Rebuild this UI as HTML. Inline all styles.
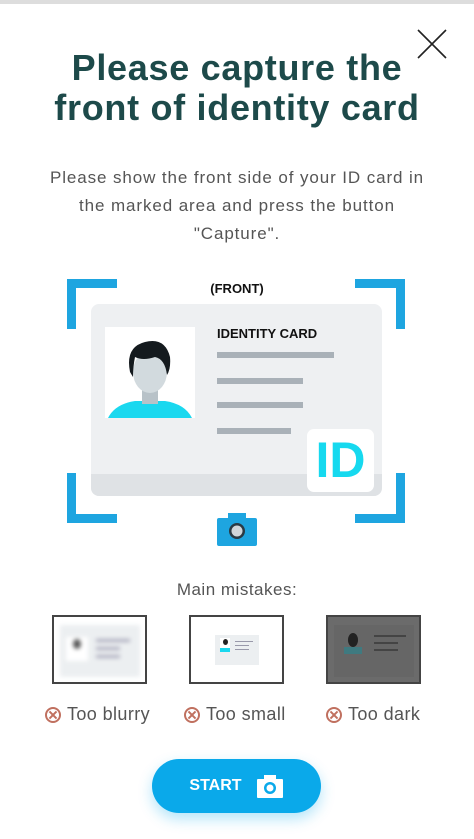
<!DOCTYPE html>
<html><head><meta charset="utf-8"><style>
*{margin:0;padding:0;box-sizing:border-box}
body{width:474px;height:839px;background:#fff;font-family:"Liberation Sans",sans-serif;position:relative;overflow:hidden}
.abs{position:absolute}
.title{left:0;width:474px;text-align:center;color:#1d4a4a;font-weight:bold;font-size:36px;line-height:40px;top:48px;letter-spacing:0.7px}
.sub{left:0;width:474px;text-align:center;color:#555;font-size:17px;line-height:28px;top:164px;letter-spacing:0.9px}
.br{position:absolute;width:50px;height:50px;border:0 solid #1ea5e0}
.line{position:absolute;height:6px;background:#a9b1b8}
.thumb{position:absolute;top:615px;width:95px;height:69px;border:2px solid #444;overflow:hidden}
.lbl{position:absolute;top:704px;font-size:18px;color:#555;display:flex;align-items:center;gap:6px;letter-spacing:0.4px}
.x{width:16px;height:16px;border:2px solid #c0705f;border-radius:50%;position:relative}
.x:before,.x:after{content:"";position:absolute;left:5px;top:1px;width:2px;height:10px;background:#c0705f;transform:rotate(45deg)}
.x:after{transform:rotate(-45deg)}
</style></head><body>
<div class="abs" style="left:0;top:0;width:474px;height:4px;background:#ddd"></div>
<svg class="abs" style="left:416px;top:28px" width="32" height="32"><path d="M2 2L30 30M30 2L2 30" stroke="#222" stroke-width="1.6"/></svg>
<div class="abs title">Please capture the<br>front of identity card</div>
<div class="abs sub">Please show the front side of your ID card in<br>the marked area and press the button<br>"Capture".</div>

<div class="br" style="left:67px;top:279px;border-top-width:9px;border-left-width:9px"></div>
<div class="br" style="left:355px;top:279px;border-top-width:9px;border-right-width:9px"></div>
<div class="br" style="left:67px;top:473px;border-bottom-width:9px;border-left-width:9px"></div>
<div class="br" style="left:355px;top:473px;border-bottom-width:9px;border-right-width:9px"></div>
<div class="abs" style="left:0;width:474px;top:281px;text-align:center;font-weight:bold;font-size:13px;color:#111">(FRONT)</div>
<div class="abs" style="left:91px;top:304px;width:291px;height:192px;background:#eef0f2;border-radius:8px;overflow:hidden">
 <div class="abs" style="left:0;bottom:0;width:100%;height:22px;background:#dfe2e5"></div>
</div>
<div class="abs" style="left:105px;top:327px;width:90px;height:91px;background:#fff;overflow:hidden">
<svg width="90" height="91"><path d="M3 91 Q10 77 30 74 L60 74 Q80 77 87 91Z" fill="#1ad8ef"/><rect x="37" y="55" width="16" height="22" fill="#b8c2c8"/><ellipse cx="45" cy="45" rx="17" ry="21" fill="#d2dade"/><path d="M25 45 Q20 20 40 15 Q60 10 65 30 Q66 42 62 48 Q60 32 50 30 Q38 34 30 30 Q28 40 28 50Z" fill="#141a1e"/></svg>
</div>
<div class="abs" style="left:217px;top:326px;font-weight:bold;font-size:13px;color:#111">IDENTITY CARD</div>
<div class="line" style="left:217px;top:352px;width:117px"></div>
<div class="line" style="left:217px;top:378px;width:86px"></div>
<div class="line" style="left:217px;top:402px;width:86px"></div>
<div class="line" style="left:217px;top:428px;width:74px"></div>
<div class="abs" style="left:307px;top:429px;width:67px;height:63px;background:#fff;border-radius:7px;color:#16d9ef;font-weight:bold;font-size:50px;line-height:63px;text-align:center">ID</div>
<svg class="abs" style="left:217px;top:508px" width="40" height="38"><path d="M11 5h18v5h9a2 2 0 0 1 2 2v24a2 2 0 0 1-2 2H2a2 2 0 0 1-2-2V12a2 2 0 0 1 2-2h9z" fill="#1ea5e0"/><circle cx="20" cy="23" r="8" fill="#2a3a44"/><circle cx="20" cy="23" r="5.5" fill="#d0d6da"/></svg>

<div class="abs" style="left:0;width:474px;top:580px;text-align:center;font-size:17px;color:#555;letter-spacing:0.5px">Main mistakes:</div>
<div class="thumb" style="left:52px;background:#fff"><div class="abs" style="left:6px;top:8px;width:80px;height:52px;background:#eceff1;filter:blur(2px)"><div class="abs" style="left:6px;top:12px;width:22px;height:24px;background:#fff"></div><div class="abs" style="left:13px;top:14px;width:8px;height:10px;background:#555;border-radius:50%"></div><div class="abs" style="left:36px;top:14px;width:34px;height:3px;background:#aab"></div><div class="abs" style="left:36px;top:22px;width:24px;height:3px;background:#aab"></div><div class="abs" style="left:36px;top:30px;width:24px;height:3px;background:#aab"></div></div></div>
<div class="thumb" style="left:189px;background:#fff"><div class="abs" style="left:24px;top:18px;width:44px;height:30px;background:#eceff1"><div class="abs" style="left:5px;top:3px;width:10px;height:14px;background:#fff"></div><div class="abs" style="left:8px;top:4px;width:5px;height:6px;background:#222;border-radius:50%"></div><div class="abs" style="left:5px;top:13px;width:10px;height:4px;background:#1ad8ef"></div><div class="abs" style="left:20px;top:6px;width:18px;height:1px;background:#99a"></div><div class="abs" style="left:20px;top:10px;width:14px;height:1px;background:#99a"></div><div class="abs" style="left:20px;top:14px;width:14px;height:1px;background:#99a"></div></div></div>
<div class="thumb" style="left:326px;background:#6b6b6b"><div class="abs" style="left:6px;top:8px;width:80px;height:52px;background:#666"><div class="abs" style="left:14px;top:8px;width:10px;height:14px;background:#222;border-radius:50%"></div><div class="abs" style="left:10px;top:22px;width:18px;height:7px;background:#3f7a80"></div><div class="abs" style="left:40px;top:10px;width:32px;height:2px;background:#444"></div><div class="abs" style="left:40px;top:17px;width:24px;height:2px;background:#444"></div><div class="abs" style="left:40px;top:24px;width:24px;height:2px;background:#444"></div></div></div>
<div class="lbl" style="left:45px"><div class="x"></div>Too blurry</div>
<div class="lbl" style="left:184px"><div class="x"></div>Too small</div>
<div class="lbl" style="left:326px"><div class="x"></div>Too dark</div>

<div class="abs" style="left:152px;top:759px;width:169px;height:54px;border-radius:27px;background:#0aa9ea;box-shadow:0 6px 14px rgba(10,169,234,0.3);color:#fff;font-weight:bold;font-size:16px;display:flex;align-items:center;justify-content:center;gap:14px">START<svg width="28" height="24"><path d="M8 1h12v4h6a1 1 0 0 1 1 1v17a1 1 0 0 1-1 1H2a1 1 0 0 1-1-1V6a1 1 0 0 1 1-1h6z" fill="#fff"/><circle cx="14" cy="14" r="6" fill="#0aa9ea"/><circle cx="14" cy="14" r="3.5" fill="#fff"/></svg></div>
</body></html>
